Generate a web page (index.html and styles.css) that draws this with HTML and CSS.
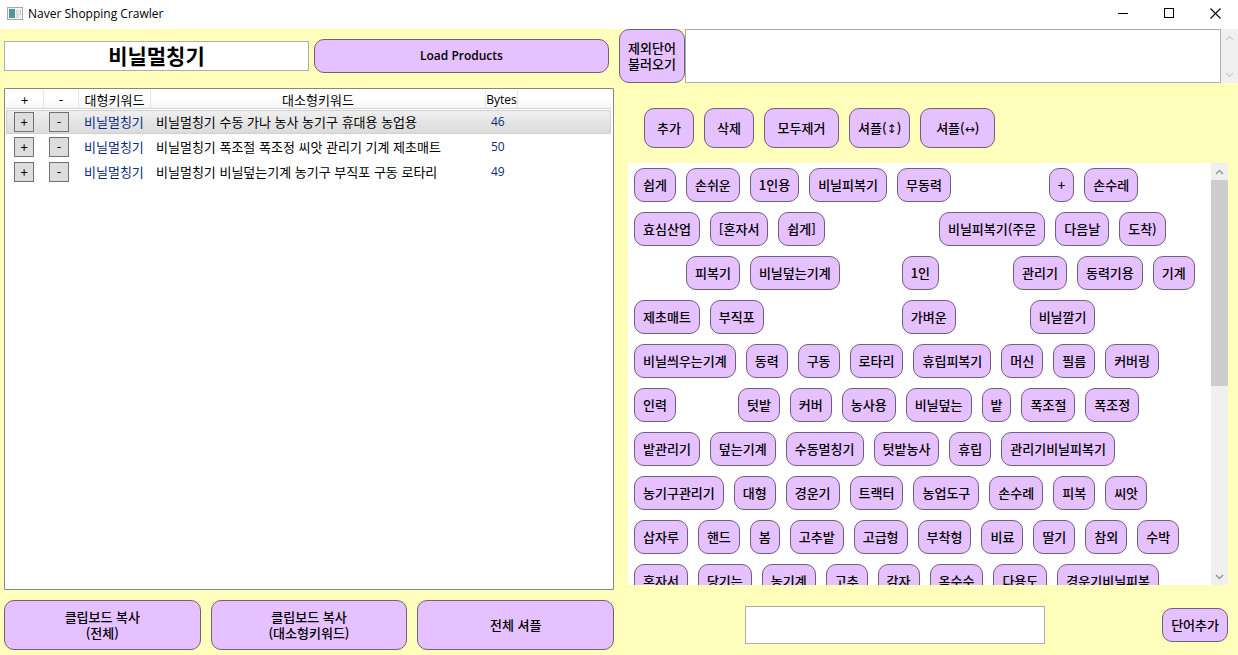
FILE: index.html
```
<!DOCTYPE html>
<html lang="ko">
<head>
<meta charset="utf-8">
<title>Naver Shopping Crawler</title>
<link rel="stylesheet" href="styles.css">
</head>
<body>
<header class="titlebar">
  <svg class="app-icon" width="16" height="14" viewBox="0 0 16 14" aria-hidden="true">
    <defs><linearGradient id="g" x1="0" y1="0" x2="1" y2="1"><stop offset="0" stop-color="#4f8fa8"/><stop offset="1" stop-color="#4fa083"/></linearGradient></defs>
    <rect x="0.5" y="0.5" width="15" height="12" fill="#f3f3f3" stroke="#a5a9ad"/>
    <rect x="2" y="2" width="6" height="9" fill="url(#g)"/>
    <rect x="9" y="3" width="3" height="8" fill="#dcdfe2"/>
    <rect x="13" y="3" width="1" height="5" fill="#b9c4cc"/>
  </svg>
  <h1 class="title">Naver Shopping Crawler</h1>
  <div class="window-controls">
    <button class="window-btn" aria-label="최소화"><svg width="11" height="11" viewBox="0 0 11 11"><path d="M0 5.5H10" stroke="#000" fill="none"/></svg></button>
    <button class="window-btn" aria-label="최대화"><svg width="11" height="11" viewBox="0 0 11 11"><rect x="0.5" y="0.5" width="9" height="9" stroke="#000" fill="none"/></svg></button>
    <button class="window-btn" aria-label="닫기"><svg width="11" height="11" viewBox="0 0 11 11"><path d="M0.5 0.5L10.5 10.5M10.5 0.5L0.5 10.5" stroke="#000" stroke-width="1.1" fill="none"/></svg></button>
  </div>
</header>
<main class="app">
  <section class="left">
    <div class="search">
      <input class="search-input" type="text" value="비닐멀칭기" aria-label="검색어">
      <button class="btn load latin">Load Products</button>
    </div>
    <div class="list">
      <table class="keywords">
        <colgroup><col class="c-plus"><col class="c-minus"><col class="c-main"><col class="c-sub"><col class="c-bytes"><col></colgroup>
        <thead>
          <tr><th>+</th><th>-</th><th>대형키워드</th><th>대소형키워드</th><th class="latin">Bytes</th><th class="rest"></th></tr>
        </thead>
        <tbody>
          <tr class="selected"><td><button class="mini" aria-label="추가">+</button></td><td><button class="mini" aria-label="제거">-</button></td><td class="blue">비닐멀칭기</td><td>비닐멀칭기 수동 가나 농사 농기구 휴대용 농업용</td><td class="blue latin">46</td><td></td></tr>
          <tr><td><button class="mini" aria-label="추가">+</button></td><td><button class="mini" aria-label="제거">-</button></td><td class="blue">비닐멀칭기</td><td>비닐멀칭기 폭조절 폭조정 씨앗 관리기 기계 제초매트</td><td class="blue latin">50</td><td></td></tr>
          <tr><td><button class="mini" aria-label="추가">+</button></td><td><button class="mini" aria-label="제거">-</button></td><td class="blue">비닐멀칭기</td><td>비닐멀칭기 비닐덮는기계 농기구 부직포 구동 로타리</td><td class="blue latin">49</td><td></td></tr>
        </tbody>
      </table>
    </div>
    <div class="actions">
      <button class="btn">클립보드 복사<br>(전체)</button>
      <button class="btn">클립보드 복사<br>(대소형키워드)</button>
      <button class="btn">전체 셔플</button>
    </div>
  </section>
  <section class="right">
    <div class="exclude">
      <button class="btn exclude-btn">제외단어<br>불러오기</button>
      <textarea class="exclude-text" aria-label="제외단어"></textarea>
      <div class="scrollbar disabled">
        <svg class="arrow" width="9" height="6" viewBox="0 0 9 6"><path d="M1 5L4.5 1.5L8 5"/></svg>
        <svg class="arrow" width="9" height="6" viewBox="0 0 9 6"><path d="M1 1L4.5 4.5L8 1"/></svg>
      </div>
    </div>
    <div class="toolbar">
      <button class="btn tool">추가</button>
      <button class="btn tool">삭제</button>
      <button class="btn tool wide">모두제거</button>
      <button class="btn tool">셔플(<span class="sym">↕</span>)</button>
      <button class="btn tool wide">셔플(<span class="sym">↔</span>)</button>
    </div>
    <div class="words">
      <div class="word-rows">
        <div class="row"><button class="btn chip">쉽게</button><button class="btn chip">손쉬운</button><button class="btn chip">1인용</button><button class="btn chip">비닐피복기</button><button class="btn chip">무동력</button><span class="slot five"></span><button class="btn chip">+</button><button class="btn chip">손수레</button></div>
        <div class="row"><button class="btn chip">효심산업</button><button class="btn chip">[혼자서</button><button class="btn chip">쉽게]</button><span class="slot two"></span><span class="slot two"></span><button class="btn chip">비닐피복기(주문</button><button class="btn chip">다음날</button><button class="btn chip">도착)</button></div>
        <div class="row"><span class="slot two"></span><button class="btn chip">피복기</button><button class="btn chip">비닐덮는기계</button><span class="slot two"></span><button class="btn chip">1인</button><span class="slot three"></span><button class="btn chip">관리기</button><button class="btn chip">동력기용</button><button class="btn chip">기계</button></div>
        <div class="row"><button class="btn chip">제초매트</button><button class="btn chip">부직포</button><span class="slot three"></span><span class="slot three"></span><button class="btn chip">가벼운</button><span class="slot three"></span><button class="btn chip">비닐깔기</button></div>
        <div class="row"><button class="btn chip">비닐씌우는기계</button><button class="btn chip">동력</button><button class="btn chip">구동</button><button class="btn chip">로타리</button><button class="btn chip">휴립피복기</button><button class="btn chip">머신</button><button class="btn chip">필름</button><button class="btn chip">커버링</button></div>
        <div class="row"><button class="btn chip">인력</button><span class="slot two"></span><button class="btn chip">텃밭</button><button class="btn chip">커버</button><button class="btn chip">농사용</button><button class="btn chip">비닐덮는</button><button class="btn chip">밭</button><button class="btn chip">폭조절</button><button class="btn chip">폭조정</button></div>
        <div class="row"><button class="btn chip">밭관리기</button><button class="btn chip">덮는기계</button><button class="btn chip">수동멀칭기</button><button class="btn chip">텃밭농사</button><button class="btn chip">휴립</button><button class="btn chip">관리기비닐피복기</button></div>
        <div class="row"><button class="btn chip">농기구관리기</button><button class="btn chip">대형</button><button class="btn chip">경운기</button><button class="btn chip">트랙터</button><button class="btn chip">농업도구</button><button class="btn chip">손수례</button><button class="btn chip">피복</button><button class="btn chip">씨앗</button></div>
        <div class="row"><button class="btn chip">삽자루</button><button class="btn chip">핸드</button><button class="btn chip">봄</button><button class="btn chip">고추밭</button><button class="btn chip">고급형</button><button class="btn chip">부착형</button><button class="btn chip">비료</button><button class="btn chip">딸기</button><button class="btn chip">참외</button><button class="btn chip">수박</button></div>
        <div class="row"><button class="btn chip">혼자서</button><button class="btn chip">당기는</button><button class="btn chip">농기계</button><button class="btn chip">고추</button><button class="btn chip">감자</button><button class="btn chip">옥수수</button><button class="btn chip">다용도</button><button class="btn chip">경운기비닐피복</button></div>
      </div>
      <div class="scrollbar">
        <svg class="arrow" width="9" height="6" viewBox="0 0 9 6"><path d="M1 5L4.5 1.5L8 5"/></svg>
        <div class="thumb"></div>
        <svg class="arrow" width="9" height="6" viewBox="0 0 9 6"><path d="M1 1L4.5 4.5L8 1"/></svg>
      </div>
    </div>
    <div class="add">
      <div class="add-field"><input class="add-input" type="text" aria-label="추가할 단어"></div>
      <button class="btn chip">단어추가</button>
    </div>
  </section>
</main>
</body>
</html>
```
FILE: styles.css
```
* { box-sizing: border-box; }

body {
  margin: 0;
  height: 100vh;
  display: flex;
  flex-direction: column;
  overflow: hidden;
  background: #ffffbb;
  color: #000;
  font: 13px/16px "Noto Sans CJK KR", sans-serif;
}

button, input, textarea { font: inherit; color: inherit; }
button { padding: 0; white-space: nowrap; }
.latin { font-family: "Open Sans", "Noto Sans", sans-serif; font-size: 12px; }

.titlebar {
  flex: none;
  display: flex;
  align-items: center;
  height: 29px;
  padding: 0 0 2px 7px;
  background: #fff;
}
.title {
  flex: 1;
  margin: 0 0 0 5px;
  font: 12px/16px "Open Sans", "Noto Sans", sans-serif;
}
.window-controls { display: flex; }
.window-btn {
  display: grid;
  place-items: center;
  width: 46px;
  height: 27px;
  border: 0;
  background: none;
}

.app {
  flex: 1;
  min-height: 0;
  display: grid;
  grid-template-columns: 1fr 1fr;
  grid-template-rows: minmax(0, 1fr);
}

.btn {
  border: 1px solid #70607c;
  border-radius: 10px;
  background: #e6c1ff;
  font-weight: 500;
}
.btn.latin { font-weight: 600; }

.left {
  display: flex;
  flex-direction: column;
  padding: 10px 5px 5px 4px;
}
.search {
  display: flex;
  align-items: center;
  gap: 5px;
  margin: 0 5px 15px 0;
}
.search-input {
  flex: 31;
  min-width: 0;
  height: 30px;
  padding: 0 0 2px;
  border: 1px solid #abadb3;
  background: #fff;
  font-size: 21px;
  font-weight: 700;
  text-align: center;
}
.load { flex: 30; height: 34px; }

.list {
  flex: 1;
  min-height: 0;
  padding: 0 2px 0 1px;
  border: 1px solid #828790;
  border-radius: 1px;
  background: #fff;
  overflow: hidden;
}
.keywords {
  width: 100%;
  table-layout: fixed;
  border-collapse: separate;
  border-spacing: 0 1px;
}
.c-plus { width: 38px; }
.c-minus { width: 35px; }
.c-main { width: 72px; }
.c-sub { width: 335px; }
.c-bytes { width: 32px; }
.keywords th {
  height: 19px;
  padding: 2px 0 0;
  border-right: 1px solid #e3e6e8;
  border-bottom: 1px solid #d5d5d5;
  background: linear-gradient(#fff 40%, #f5f6f7);
  font-weight: 400;
  white-space: nowrap;
}
.keywords th.rest { border-right: 0; }
.keywords td {
  height: 24px;
  padding: 0 0 0 5px;
  white-space: nowrap;
}
.keywords td:nth-child(1) { padding-left: 8px; }
.selected {
  background: linear-gradient(#f0f0f0, #dadada);
  box-shadow: inset 0 0 0 1px #d0d0d0;
  border-radius: 2px;
}
.blue { color: #0b2a80; }
.mini {
  display: block;
  width: 20px;
  height: 20px;
  border: 1px solid #707070;
  background: #ddd;
}

.actions { display: flex; gap: 10px; margin-top: 10px; }
.actions .btn { flex: 1; height: 50px; }

.right { display: flex; flex-direction: column; min-width: 0; }
.exclude { display: flex; height: 54px; }
.exclude-btn { width: 66px; }
.exclude-text {
  flex: 1;
  min-width: 0;
  border: 1px solid #abadb3;
  background: #fff;
  resize: none;
}

.scrollbar {
  flex: none;
  display: flex;
  flex-direction: column;
  align-items: center;
  justify-content: space-between;
  width: 17px;
  padding: 6px 0 5px;
  background: #f0f0f0;
}
.arrow { flex: none; fill: none; stroke: #999; stroke-width: 1.5; }
.disabled .arrow { stroke: #d0d0d0; }
.thumb {
  width: 100%;
  height: 50%;
  margin: 5px 0 auto;
  background: #cdcdcd;
}

.toolbar { display: flex; gap: 10px; padding: 25px 25px 15px; }
.tool { min-width: 50px; height: 40px; padding: 0 8px; }
.wide { min-width: 75px; }
.sym { font-family: "DejaVu Sans", sans-serif; font-size: 12px; }

.words {
  flex: 1;
  min-height: 0;
  display: flex;
  margin: 0 10px 0 9px;
  background: #fff;
}
.word-rows {
  flex: 1;
  min-width: 0;
  display: flex;
  flex-direction: column;
  gap: 10px;
  padding: 5px 6px 0;
  overflow: hidden;
}
.row { flex: none; display: flex; gap: 10px; }
.chip { flex: none; height: 34px; padding: 0 8px; }
.slot { flex: none; }
.two { width: 42px; }
.three { width: 54px; }
.five { width: 78px; }

.add {
  display: flex;
  align-items: center;
  height: 70px;
  padding: 10px 10px 0 9px;
}
.add-field { flex: 1; display: flex; justify-content: center; }
.add-input {
  width: 300px;
  height: 38px;
  border: 1px solid #abadb3;
  background: #fff;
}
```
